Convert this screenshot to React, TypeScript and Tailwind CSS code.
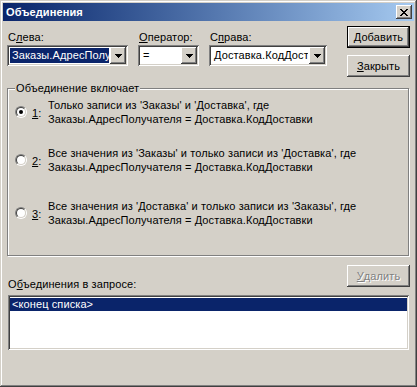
import React from 'react';

const raised =
  'shadow-[inset_-1px_-1px_0_#404040,inset_1px_1px_0_#fff,inset_-2px_-2px_0_#808080,inset_2px_2px_0_#d4d0c8]';
const sunken =
  'shadow-[inset_1px_1px_0_#808080,inset_-1px_-1px_0_#fff,inset_2px_2px_0_#404040,inset_-2px_-2px_0_#d4d0c8]';

const Arrow = () => (
  <svg width="7" height="4" viewBox="0 0 7 4" shapeRendering="crispEdges">
    <rect x="0" y="0" width="7" height="1" fill="#000" />
    <rect x="1" y="1" width="5" height="1" fill="#000" />
    <rect x="2" y="2" width="3" height="1" fill="#000" />
    <rect x="3" y="3" width="1" height="1" fill="#000" />
  </svg>
);

const CloseGlyph = () => {
  const rows = [
    [0, 1, 6, 7],
    [1, 2, 5, 6],
    [2, 3, 4, 5],
    [3, 4],
    [2, 3, 4, 5],
    [1, 2, 5, 6],
    [0, 1, 6, 7],
  ];
  return (
    <svg width="8" height="7" viewBox="0 0 8 7" shapeRendering="crispEdges">
      {rows.map((cols, y) =>
        cols.map((x) => <rect key={`${y}-${x}`} x={x} y={y} width="1" height="1" fill="#000" />)
      )}
    </svg>
  );
};

function Combo({
  width,
  value,
  selected,
}: {
  width: string;
  value: string;
  selected?: boolean;
}) {
  return (
    <div className={`${width} h-[21px] bg-white p-[2px] flex ${sunken}`}>
      <div className="flex-1 min-w-0 p-[1px] overflow-hidden">
        <div
          className={`h-full pl-[2px] whitespace-nowrap overflow-hidden leading-[15px] ${
            selected ? 'bg-[#0a246a] text-white' : 'text-black'
          }`}
        >
          {value}
        </div>
      </div>
      <div className={`w-[16px] h-[17px] bg-[#d4d0c8] flex items-center justify-center ${raised}`}>
        <Arrow />
      </div>
    </div>
  );
}

function Field({
  label,
  width,
  value,
  selected,
}: {
  label: React.ReactNode;
  width: string;
  value: string;
  selected?: boolean;
}) {
  return (
    <div className="flex flex-col gap-[1px]">
      <div className="leading-[13px] pl-[1px]">{label}</div>
      <Combo width={width} value={value} selected={selected} />
    </div>
  );
}

function Button({
  children,
  isDefault,
  disabled,
}: {
  children: React.ReactNode;
  isDefault?: boolean;
  disabled?: boolean;
}) {
  if (isDefault) {
    return (
      <div className="w-[63px] h-[22px] border border-black">
        <div className={`w-full h-full flex items-center justify-center ${raised}`}>{children}</div>
      </div>
    );
  }
  return (
    <div
      className={`w-[63px] h-[22px] flex items-center justify-center ${raised} ${
        disabled ? 'text-[#808080] [text-shadow:1px_1px_0_#fff]' : ''
      }`}
    >
      {children}
    </div>
  );
}

function Radio({ checked }: { checked?: boolean }) {
  return (
    <div className="w-[12px] h-[12px] rounded-full border border-t-[#808080] border-l-[#808080] border-b-white border-r-white shrink-0">
      <div className="w-full h-full rounded-full border border-t-[#404040] border-l-[#404040] border-b-[#d4d0c8] border-r-[#d4d0c8] bg-white flex items-center justify-center">
        {checked && <div className="w-[4px] h-[4px] rounded-full bg-black" />}
      </div>
    </div>
  );
}

function Option({
  n,
  line1,
  checked,
  className,
}: {
  n: string;
  line1: string;
  checked?: boolean;
  className?: string;
}) {
  return (
    <div className={`flex items-center ${className ?? ''}`}>
      <Radio checked={checked} />
      <div className="w-[16px] ml-[5px] leading-[13px] mt-[2px]">
        <u>{n}</u>:
      </div>
      <div className="leading-[14px]">
        <div>{line1}</div>
        <div>Заказы.АдресПолучателя = Доставка.КодДоставки</div>
      </div>
    </div>
  );
}

export default function App() {
  return (
    <div
      className={`w-[417px] h-[387px] bg-[#d4d0c8] p-[3px] flex flex-col text-[11px] tracking-[0.1px] text-black font-['Liberation_Sans',Arial,sans-serif] ${'shadow-[inset_-1px_-1px_0_#404040,inset_1px_1px_0_#d4d0c8,inset_-2px_-2px_0_#808080,inset_2px_2px_0_#fff]'}`}
    >
      {/* title bar */}
      <div className="h-[18px] flex items-center pl-[3px] pr-[2px] bg-linear-to-r from-[#0a246a] to-[#a6caf0]">
        <span className="flex-1 font-bold text-white leading-[13px]">Объединения</span>
        <div className={`w-[16px] h-[14px] bg-[#d4d0c8] flex items-center justify-center ${raised}`}>
          <CloseGlyph />
        </div>
      </div>

      <div className="flex-1 flex flex-col px-[4px]">
        {/* top row */}
        <div className="flex pt-[5px]">
          <div className="flex gap-[10px] mt-[5px]">
            <Field
              label={
                <>
                  С<u>л</u>ева:
                </>
              }
              width="w-[121px]"
              value="Заказы.АдресПолучателя"
              selected
            />
            <Field
              label={
                <>
                  <u>О</u>ператор:
                </>
              }
              width="w-[61px]"
              value="="
            />
            <Field
              label={
                <>
                  С<u>п</u>рава:
                </>
              }
              width="w-[118px]"
              value="Доставка.КодДоставки"
            />
          </div>
          <div className="ml-auto flex flex-col gap-[7px]">
            <Button isDefault>
              <u>Д</u>обавить
            </Button>
            <Button>
              <u>З</u>акрыть
            </Button>
          </div>
        </div>

        {/* group box */}
        <div className="mt-[11px] mr-[1px] h-[168px] border border-[#808080] shadow-[inset_1px_1px_0_#fff,1px_1px_0_#fff] flex flex-col">
          <div className="-mt-[7px] ml-[7px] w-fit px-[1px] bg-[#d4d0c8] leading-[13px]">Объединение включает</div>
          <div className="pl-[7px] flex flex-col">
            <Option
              n="1"
              checked
              className="mt-[3px]"
              line1="Только записи из 'Заказы' и 'Доставка', где"
            />
            <Option
              n="2"
              className="mt-[20px]"
              line1="Все значения из 'Заказы' и только записи из 'Доставка', где"
            />
            <Option
              n="3"
              className="mt-[25px]"
              line1="Все значения из 'Доставка' и только записи из 'Заказы', где"
            />
          </div>
        </div>

        {/* joins in query */}
        <div className="flex mt-[9px] h-[26px]">
          <div className="mt-[12px] ml-[1px] leading-[14px]">
            О<u>б</u>ъединения в запросе:
          </div>
          <div className="ml-auto">
            <Button disabled>
              <u>У</u>далить
            </Button>
          </div>
        </div>
        <div className={`mt-[4px] ml-[1px] mr-[1px] h-[55px] bg-white p-[2px] ${sunken}`}>
          <div className="mt-[1px] h-[13px] leading-[13px] pl-[2px] bg-[#0a246a] text-white">
            &lt;конец списка&gt;
          </div>
        </div>
      </div>
    </div>
  );
}
